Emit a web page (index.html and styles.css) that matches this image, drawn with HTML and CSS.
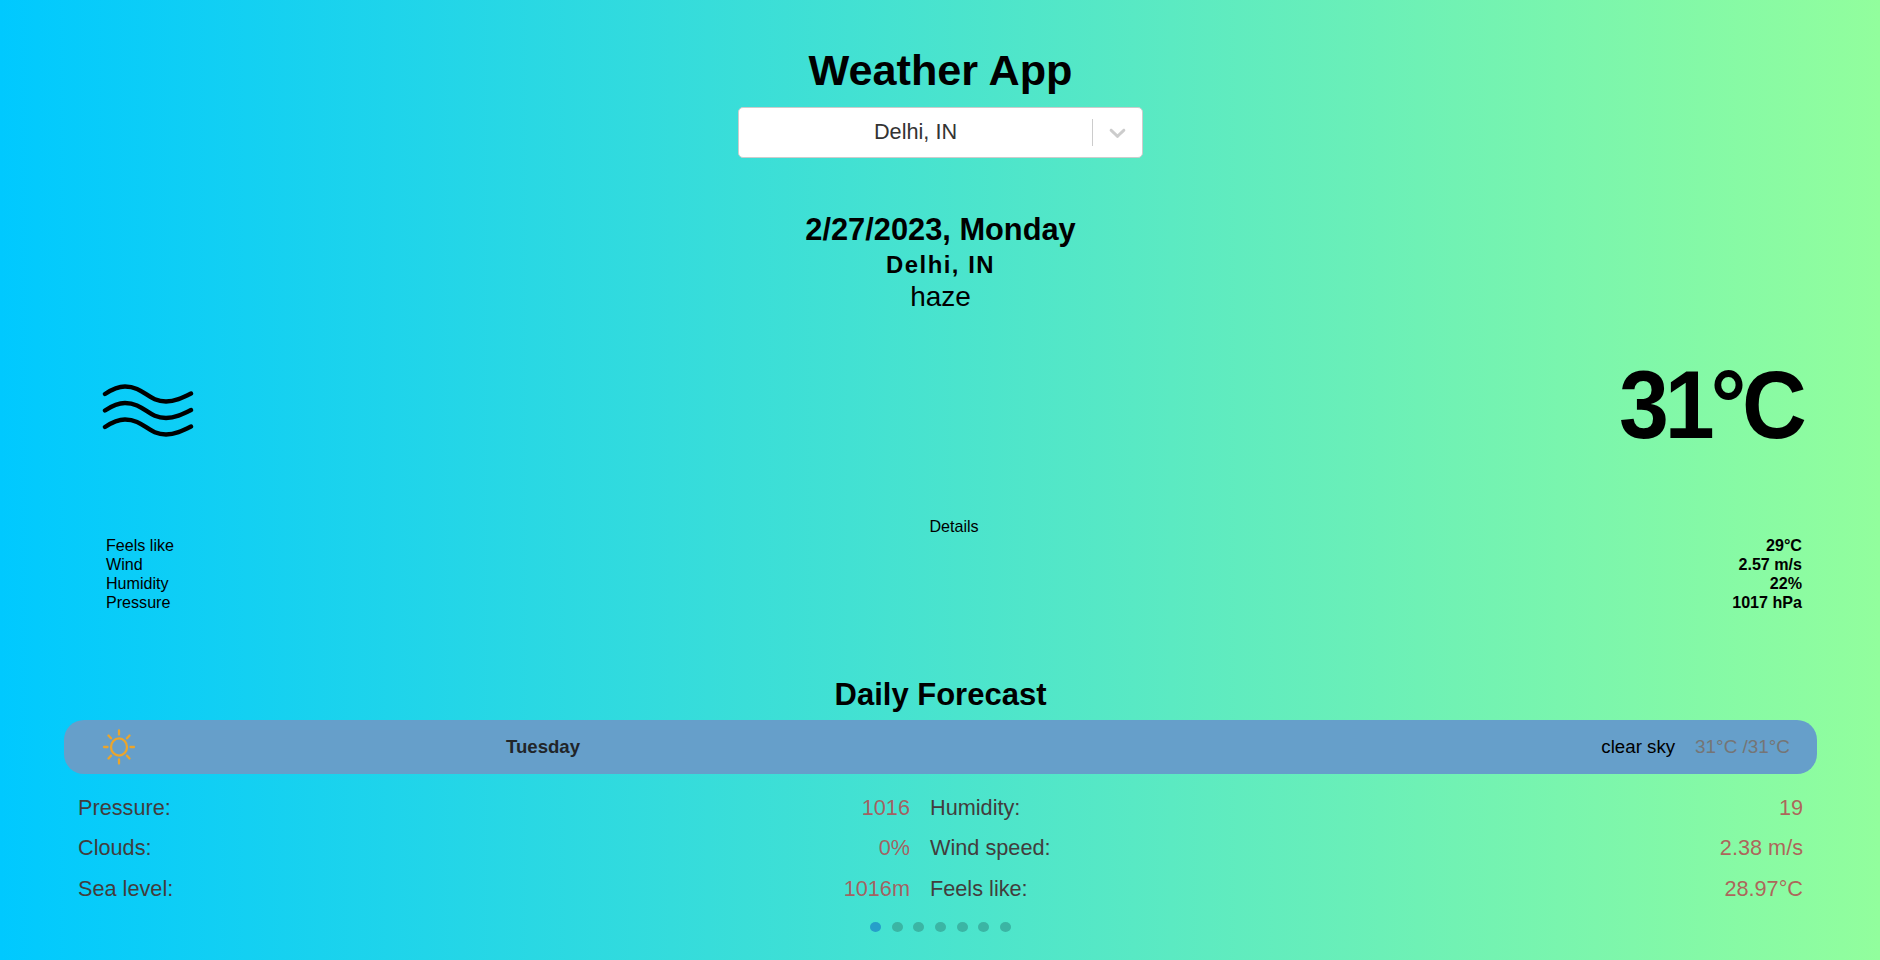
FILE: index.html
```
<!DOCTYPE html>
<html lang="en"><head><meta charset="utf-8"><title>Weather App</title><link rel="stylesheet" href="styles.css"></head>
<body>
<main class="app">
<h1 class="title">Weather App</h1>
<div class="select"><div class="value">Delhi, IN</div><span class="separator"></span><div class="indicator"><svg width="27" height="27" viewBox="0 0 20 20"><path d="M4.516 7.548c0.436-0.446 1.043-0.481 1.576 0l3.908 3.747 3.908-3.747c0.533-0.481 1.141-0.446 1.574 0 0.436 0.445 0.408 1.197 0 1.615-0.406 0.418-4.695 4.502-4.695 4.502-0.217 0.223-0.502 0.335-0.787 0.335s-0.57-0.112-0.789-0.335c0 0-4.287-4.084-4.695-4.502s-0.436-1.17 0-1.615z"/></svg></div></div>
<section class="summary"><h2 class="date">2/27/2023, Monday</h2><p class="city">Delhi, IN</p><p class="description">haze</p></section>
<section class="now"><svg class="haze" width="92" height="56" viewBox="0 0 92 56"><path d="M3 12C9 8 15 4.500 23 4.500C42 4.500 46 19.500 64 19.500C73 19.500 80 16 89 11.500M3 28.500C9 24.500 15 21 23 21C42 21 46 36 64 36C73 36 80 32.500 89 28M3 45C9 41 15 37.500 23 37.500C42 37.500 46 52.500 64 52.500C73 52.500 80 49 89 44.500"/></svg><p class="temperature">31°C</p></section>
<section class="details"><p class="details-title">Details</p>
<dl><div class="row"><dt>Feels like</dt><dd>29°C</dd></div><div class="row"><dt>Wind</dt><dd>2.57 m/s</dd></div><div class="row"><dt>Humidity</dt><dd>22%</dd></div><div class="row"><dt>Pressure</dt><dd>1017 hPa</dd></div></dl></section>
<section class="forecast"><h2 class="forecast-title">Daily Forecast</h2>
<div class="day"><svg class="sun" width="34" height="38" viewBox="0 0 34 38"><ellipse cx="17" cy="19" rx="8" ry="8.600"/><path d="M17 2.500v4M17 31.500v4M2 19h3.500M28.500 19h3.500M6.500 7.500l2.500 2.800M25 27.700l2.500 2.800M6.500 30.500l2.500-2.800M25 10.300l2.500-2.800"/></svg><span class="day-name">Tuesday</span><span class="sky">clear sky</span><span class="range">31°C /31°C</span></div>
<div class="grid"><div class="cell"><span>Pressure:</span><b>1016</b></div><div class="cell"><span>Humidity:</span><b>19</b></div><div class="cell"><span>Clouds:</span><b>0%</b></div><div class="cell"><span>Wind speed:</span><b>2.38 m/s</b></div><div class="cell"><span>Sea level:</span><b>1016m</b></div><div class="cell"><span>Feels like:</span><b>28.97°C</b></div></div>
<div class="dots"><i class="dot active"></i><i class="dot"></i><i class="dot"></i><i class="dot"></i><i class="dot"></i><i class="dot"></i><i class="dot"></i></div></section>
</main></body></html>
```
FILE: styles.css
```
*{box-sizing:border-box}
body,h1,h2,p,dl,dd{margin:0}
body{font-family:"Liberation Sans",Arial,sans-serif;color:#000}
.app{height:960px;padding:45px 63px 0 64px;background:linear-gradient(to right,#00c9ff,#92fe9d);overflow:hidden}
.title{font-size:43.2px;line-height:51px;text-align:center}
.select{width:405px;height:51px;margin:11px auto 0;display:flex;align-items:center;background:#fff;border:1px solid #ccc;border-radius:5px}
.value{flex:1;text-align:center;font-size:21.7px;color:#333;padding-bottom:2px}
.separator{width:1px;height:27px;background:#ccc}
.indicator{width:49px;display:flex;justify-content:center;fill:#ccc}
.summary{margin-top:53px;text-align:center}
.date{font-size:30.8px;line-height:37px}
.city{font-size:23.9px;line-height:33px;font-weight:700;letter-spacing:1.5px}
.description{font-size:28px;line-height:31px}
.now{margin-top:46px;padding:0 14px 0 38px;height:100px;display:flex;justify-content:space-between;align-items:center}
.haze{fill:none;stroke:#000;stroke-width:4.4;stroke-linecap:round;margin-top:4px}
.temperature{font-size:97px;font-weight:700;letter-spacing:-4.5px;transform:scaleX(.925);transform-origin:right;margin-bottom:7px}
.details{margin-top:59px;padding:0 15px 0 42px;font-size:16.1px;line-height:19px}
.details-title{text-align:center}
.row{display:flex;justify-content:space-between}
.row dd{font-weight:700}
.forecast{margin-top:65px}
.forecast-title{font-size:31px;line-height:36px;text-align:center}
.day{height:54px;margin-top:7px;display:flex;align-items:center;border-radius:20px;background:#669fca;padding:0 27px 0 38px}
.sun{fill:none;stroke:#eba52c;stroke-width:2.3;stroke-linecap:round}
.day-name{margin-left:370px;flex:1;font-size:18.6px;font-weight:700;color:#212529}
.sky{font-size:18.7px}
.range{font-size:18.9px;color:#757575;margin-left:20px}
.grid{display:grid;grid-template-columns:832px 1fr;column-gap:20px;padding:14px 14px 0;font-size:21.7px;line-height:40.3px}
.cell{display:flex;justify-content:space-between;color:#423d3d}
.cell b{font-weight:400;color:rgba(180,75,78,.86)}
.dots{display:flex;justify-content:center;gap:10.6px;margin-top:13px}
.dot{width:11px;height:10px;border-radius:50%;background:#3bb5a4}
.active{background:#269fca}
```
